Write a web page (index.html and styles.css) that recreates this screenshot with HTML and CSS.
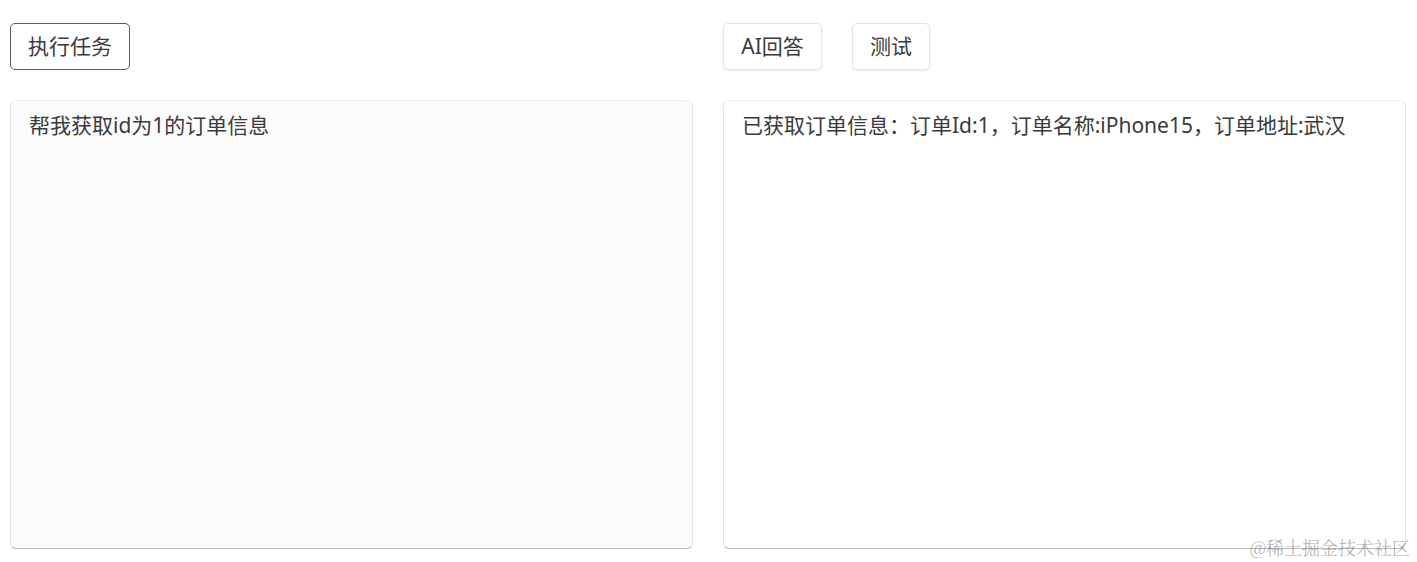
FILE: index.html
```html
<!DOCTYPE html>
<html lang="zh-CN">
<head>
<meta charset="utf-8">
<title>AI任务</title>
<link rel="stylesheet" href="styles.css">
</head>
<body>
<div class="page">
  <section class="col">
    <div class="toolbar">
      <button class="btn btn-dark">执行任务</button>
    </div>
    <div class="panel panel-input">帮我获取id为1的订单信息</div>
  </section>
  <section class="col">
    <div class="toolbar">
      <button class="btn btn-light btn-ai">AI回答</button>
      <button class="btn btn-light btn-test">测试</button>
    </div>
    <div class="panel panel-output">已获取订单信息：订单Id:1，订单名称:iPhone15，订单地址:武汉</div>
  </section>
</div>
<div class="watermark">@稀土掘金技术社区</div>
</body>
</html>
```

FILE: styles.css
```css
html, body {
  margin: 0;
  padding: 0;
  background: #ffffff;
}
body {
  font-family: "Noto Sans", "Noto Sans CJK SC", sans-serif;
  color: #333333;
  width: 1417px;
  height: 562px;
  overflow: hidden;
  position: relative;
}
.page {
  display: flex;
  gap: 30px;
  padding: 23px 0 0 10px;
}
.col {
  width: 683px;
  display: flex;
  flex-direction: column;
  gap: 30px;
}
.toolbar {
  display: flex;
  gap: 30px;
  height: 47px;
}
.btn {
  font-family: "Noto Sans", "Noto Sans CJK SC", sans-serif;
  font-size: 21px;
  font-weight: 400;
  line-height: 1;
  color: #3a3a3a;
  background: #ffffff;
  height: 47px;
  padding: 0;
  box-sizing: border-box;
  cursor: pointer;
}
.btn-dark {
  width: 120px;
  border: 1px solid #5a5a5a;
  border-radius: 5px;
}
.btn-light {
  border: 1px solid #e4e4e4;
  border-radius: 5px;
  box-shadow: 0 1px 2px rgba(0, 0, 0, 0.08);
}
.btn-ai {
  width: 99px;
}
.btn-test {
  width: 78px;
}
.panel {
  height: 449px;
  box-sizing: border-box;
  border: 1px solid #e2e2e2;
  border-top-color: #f0f0f0;
  border-bottom-color: #b8b8b8;
  border-radius: 6px;
  padding: 10px 18px;
  font-size: 21px;
  font-weight: 400;
  line-height: 28px;
  color: #3a3a3a;
}
.panel-input {
  background: #fbfbfb;
}
.panel-output {
  background: #ffffff;
}
.watermark {
  position: absolute;
  right: 7px;
  bottom: 6px;
  font-family: "Noto Serif CJK SC", "Noto Sans CJK SC", serif;
  font-size: 18px;
  font-weight: 300;
  color: rgba(110, 110, 110, 0.6);
  line-height: 1;
}
```
